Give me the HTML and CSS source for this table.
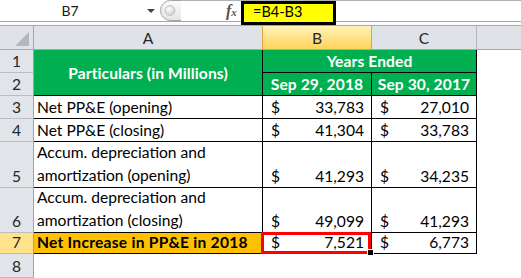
FILE: index.html
```html
<!DOCTYPE html>
<html>
<head>
<meta charset="utf-8">
<link rel="stylesheet" href="styles.css">
</head>
<body>
<div class="excel">
  <div class="fbar">
    <div class="namebox"><span class="cellref">B7</span><span class="dd"></span></div>
    <svg class="splitter" width="22" height="22" viewBox="0 0 22 22">
      <defs>
        <linearGradient id="sg" x1="0" y1="0" x2="0" y2="1">
          <stop offset="0" stop-color="#fbfbfb"/>
          <stop offset="1" stop-color="#e4e4e4"/>
        </linearGradient>
        <radialGradient id="dg" cx="0.4" cy="0.35" r="0.7">
          <stop offset="0" stop-color="#ffffff"/>
          <stop offset="1" stop-color="#c9c9c9"/>
        </radialGradient>
      </defs>
      <path d="M22 0.5 H11.5 A10 10 0 0 0 11.5 20.5 H22" fill="url(#sg)" stroke="#a3a3a3" stroke-width="1"/>
      <circle cx="11" cy="10.5" r="5" fill="url(#dg)" stroke="#c4c4c4" stroke-width="1"/>
    </svg>
    <div class="finput">
      <span class="fx">f<span class="fxx">x</span></span>
      <span class="formula">=B4-B3</span>
    </div>
  </div>
  <div class="strip"></div>
  <div class="sheet">
    <div class="hdr corner">
      <svg width="33" height="23" viewBox="0 0 33 23"><polygon points="15,20 29,20 29,6" fill="#b4b7bb"/></svg>
    </div>
    <div class="hdr col pre-sel">A</div>
    <div class="hdr col sel">B</div>
    <div class="hdr col">C</div>
    <div class="hdr col last"></div>

    <div class="rh">1</div>
    <div class="c green merged-a">Particulars (in Millions)</div>
    <div class="c green span2">Years Ended</div>

    <div class="rh">2</div>
    <div class="c green">Sep 29, 2018</div>
    <div class="c green">Sep 30, 2017</div>

    <div class="rh">3</div>
    <div class="c">Net PP&amp;E (opening)</div>
    <div class="c acct"><span>$</span><span>33,783</span></div>
    <div class="c acct"><span>$</span><span>27,010</span></div>

    <div class="rh">4</div>
    <div class="c">Net PP&amp;E (closing)</div>
    <div class="c acct"><span>$</span><span>41,304</span></div>
    <div class="c acct"><span>$</span><span>33,783</span></div>

    <div class="rh">5</div>
    <div class="c wrap"><span>Accum. depreciation and<br>amortization (opening)</span></div>
    <div class="c acct"><span>$</span><span>41,293</span></div>
    <div class="c acct"><span>$</span><span>34,235</span></div>

    <div class="rh">6</div>
    <div class="c wrap"><span>Accum. depreciation and<br>amortization (closing)</span></div>
    <div class="c acct"><span>$</span><span>49,099</span></div>
    <div class="c acct"><span>$</span><span>41,293</span></div>

    <div class="rh sel">7</div>
    <div class="c total">Net Increase in PP&amp;E in 2018</div>
    <div class="c acct active"><span>$</span><span>7,521</span></div>
    <div class="c acct"><span>$</span><span>6,773</span></div>

    <div class="rh">8</div>
  </div>
</div>
</body>
</html>
```

FILE: styles.css
```css
* {
  box-sizing: border-box;
  margin: 0;
  padding: 0;
}

html, body {
  width: 521px;
  height: 278px;
  overflow: hidden;
  background: #ffffff;
}

body {
  font-family: Lato, "Open Sans", sans-serif;
  color: #000;
}

.excel {
  width: 521px;
}

/* ---------- formula bar ---------- */
.fbar {
  display: flex;
  height: 22px;
  border-bottom: 1px solid #a8a8a8;
  background: #ffffff;
}

.namebox {
  width: 159px;
  display: flex;
  align-items: center;
}

.cellref {
  width: 140px;
  text-align: center;
  font-size: 14px;
  color: #1a1a1a;
}

.dd {
  width: 0;
  height: 0;
  margin-left: 7px;
  border-left: 4px solid transparent;
  border-right: 4px solid transparent;
  border-top: 4px solid #444;
}

.splitter {
  display: block;
  flex: none;
}

.finput {
  flex: 1;
  display: flex;
  align-items: flex-start;
  border-top: 1px solid #b2b2b2;
  padding-left: 45px;
}

.fx {
  width: 15px;
  height: 20px;
  font-family: "Liberation Serif", serif;
  font-style: italic;
  font-weight: 700;
  font-size: 16px;
  line-height: 20px;
  color: #555;
}

.fxx {
  font-size: 11px;
}

.formula {
  position: relative;
  z-index: 1;
  width: 95px;
  height: 24px;
  border: 3px solid #000;
  background: #ffff00;
  font-size: 14.5px;
  line-height: 16px;
  padding-left: 9px;
  color: #000;
}

.strip {
  height: 4px;
  border-bottom: 1px solid #a9a9a9;
  background: #fbfbfb;
}

/* ---------- sheet ---------- */
.sheet {
  display: grid;
  grid-template-columns: 34px 229px 109px 105px 1fr;
  grid-template-rows: 24px 23px 23px 23px 23px 46px 45px 21px 24px;
  font-size: 15.6px;
}

.hdr {
  background: #dfe2e6;
  border-right: 1px solid #b3b7bc;
  border-bottom: 1px solid #a4a8ad;
  display: flex;
  align-items: center;
  justify-content: center;
  color: #262626;
}

.corner {
  align-items: stretch;
  justify-content: stretch;
  border-right-color: #a4a8ad;
}

.corner svg {
  display: block;
}

.hdr.pre-sel {
  border-right-color: #e0a43c;
}

.hdr.sel {
  background: linear-gradient(#fff3b8, #ffd35a);
  border-right-color: #e0a43c;
  border-bottom-color: #e0a43c;
}

.hdr.last {
  border-right: none;
}

.rh {
  grid-column: 1;
  background: #e1e4e8;
  border-right: 1px solid #9ea3a8;
  border-bottom: 1px solid #babec3;
  display: flex;
  align-items: flex-end;
  justify-content: center;
  line-height: 22px;
  color: #262626;
}

.rh.sel {
  background: #ffe38c;
  border-bottom-color: #d9b86a;
}

.c {
  border-right: 1px solid #000;
  border-bottom: 1px solid #000;
  display: flex;
  align-items: flex-end;
  padding: 0 3px;
  line-height: 22px;
  white-space: nowrap;
}

.green {
  background: #00b050;
  color: #ffffff;
  font-weight: 700;
  justify-content: center;
  letter-spacing: 0.1px;
}

.merged-a {
  grid-row: span 2;
  align-items: center;
}

.span2 {
  grid-column: span 2;
}

.wrap {
  line-height: 23px;
}

.acct {
  justify-content: space-between;
  padding: 0 7px 0 8px;
}

.total {
  background: #ffc000;
  font-weight: 700;
  letter-spacing: 0.25px;
}

.active {
  position: relative;
}

.active::before {
  content: "";
  position: absolute;
  left: -2px;
  top: -1px;
  right: 0;
  bottom: -1px;
  border: 3px solid #ff0000;
}

.active::after {
  content: "";
  position: absolute;
  right: -3px;
  bottom: -3px;
  width: 5px;
  height: 5px;
  background: #000;
  border: 1px solid #fff;
}
```
